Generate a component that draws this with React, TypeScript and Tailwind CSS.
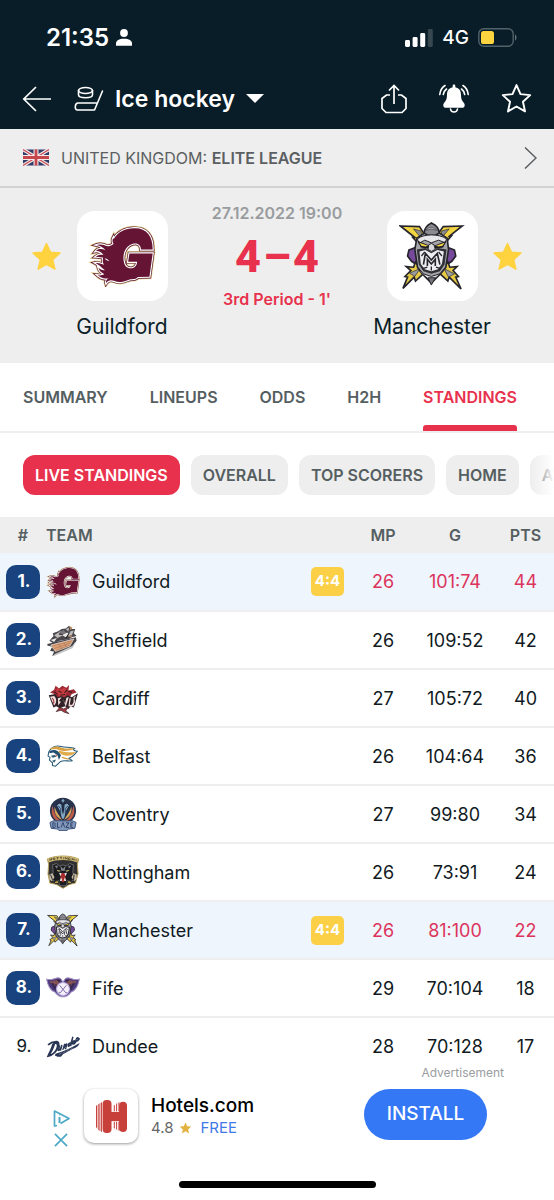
import React from "react";

type LogoProps = { className?: string };

const STAR = "M12 1.6l3.1 7 7.5.8-5.6 5.1 1.6 7.5-6.6-3.8L5.4 22 7 14.5 1.4 9.4l7.5-.8z";

const GOLD_STAR = "M12 2.4l2.9 6.2 6.9.6-5.3 4.9 1.6 6.9-6.1-3.6L5.9 21l1.6-6.9-5.3-4.9 6.9-.6z";

const G_PATH =
  "M74 44C88 18 112 9 138 8c40-1 58 24 58 66h-36c-1-14-10-22-25-18-22 6-32 28-29 52 2 18 12 26 26 24 10-2 15-9 16-20h-28l4-26h72l-10 72-36 1c-6 10-20 4-32 10-14 6-28 8-42 2-10-4-18-2-24 7-2-8 2-12 8-16-12 4-24 1-34-8 8 1 15 0 20-4-8-4-15-8-18-20 6 6 12 9 20 8-10-6-14-14-29-22 12-2 18 4 27 5-8-10-4-18-2-26 2 8 8 14 18 15-6-10-22-13-42-14 6-5 16-7 24-5-8-10-16-14-24-12 6-8 18-8 30-3-6-8-16-13-28-16 10-4 24-1 34 4 6 0 12-2 19-7-2-6-6-9-1-19 2 8 4 10 7 13z";

function GuildfordLogo({ className }: LogoProps) {
  return (
    <svg viewBox="-4 -2 210 192" className={className} aria-hidden="true">
      <path d={G_PATH} fill="none" stroke="#e3cf8d" strokeWidth="15" />
      <path d={G_PATH} fill="none" stroke="#5b1a35" strokeWidth="11" />
      <path d={G_PATH} fill="none" stroke="#fff" strokeWidth="7" />
      <path d={G_PATH} fill="#651533" />
    </svg>
  );
}

function ManchesterLogo({ className }: LogoProps) {
  return (
    <svg viewBox="0 0 200 212" className={className} aria-hidden="true">
      <g stroke="#25242c" strokeWidth="5" strokeLinejoin="miter">
        <path d="M4 15L62 17 86 54 80 72 60 58 62 72 42 50 48 50Z" fill="#f2d443" />
        <path d="M192 15L134 17 108 54 116 72 138 56 136 72 158 46 150 48Z" fill="#f2d443" />
        <path d="M44 24L76 62 66 30Z" fill="#8c8c8f" strokeWidth="2" />
        <path d="M152 24L120 62 130 30Z" fill="#8c8c8f" strokeWidth="2" />
        <path d="M30 88L56 78V134L38 122 26 106Z" fill="#77499b" />
        <path d="M168 88L142 78V134L160 122 172 106Z" fill="#77499b" />
        <path d="M22 138L44 140 50 124 76 158 50 182 46 170 12 204 26 170 18 168 36 150Z" fill="#e6ca45" />
        <path d="M176 138L154 140 148 124 122 158 148 182 152 170 188 206 172 170 180 168 164 150Z" fill="#e6ca45" />
        <path d="M32 158L64 144 48 168ZM168 160L136 144 150 170Z" fill="#9b9b9f" strokeWidth="2" />
        <path d="M54 52L78 36 98 24 122 36 146 52 150 86 142 140 126 160 98 188 70 160 56 140 48 86Z" fill="#a5a5a9" />
        <path d="M76 36C78 14 92 10 98 6c8 4 22 8 24 30L110 44H88Z" fill="#8a8a90" />
        <path d="M82 28C88 18 108 18 114 28L98 24Z" fill="#fff" strokeWidth="2" />
      </g>
      <path d="M56 54C76 38 120 38 144 54L140 66 120 58 98 66 78 58 60 68Z" fill="#e7e7ea" stroke="#25242c" strokeWidth="3" />
      <path d="M56 60L96 76 90 84 66 80ZM144 60L104 76 110 84 134 80Z" fill="#1f1e25" />
      <path d="M62 66L88 75 80 77 68 75ZM138 66L112 75 120 77 132 75Z" fill="#f2d443" />
      <path d="M90 72L98 68 106 72 110 86 98 92 88 86Z" fill="#d8d8db" stroke="#25242c" strokeWidth="3" />
      <path d="M54 86L80 82 98 94 118 82 144 86 138 132 124 152 98 160 74 152 60 132Z" fill="#303037" />
      <path d="M62 92L80 88 98 98 116 88 136 92 130 130 118 146 98 152 78 146 66 130Z" fill="#eeeef0" />
      <path d="M74 132L80 98 98 118 116 98 124 132M86 136V116L98 130 110 116V136" fill="none" stroke="#27262e" strokeWidth="5" />
      <path d="M68 106L78 94M130 106L120 94M72 144L86 140M126 144L112 140M98 138V150" stroke="#27262e" strokeWidth="4" />
      <path d="M56 140L66 156 98 184 130 156 142 140 124 160 98 168 74 160Z" fill="#dedee2" stroke="#25242c" strokeWidth="3" />
      <path d="M88 172H110L98 194Z" fill="#77777c" stroke="#25242c" strokeWidth="3" />
    </svg>
  );
}

function SheffieldLogo({ className }: LogoProps) {
  return (
    <svg viewBox="0 0 100 100" className={className} aria-hidden="true">
      <path d="M4 62L88 42 90 52 74 72 18 97 24 84 12 82 18 70 4 66Z" fill="#454247" />
      <path d="M14 65L82 47 70 68 28 84Z" fill="#dfa176" stroke="#ece5df" strokeWidth="2" />
      <path d="M18 68L78 52M24 75L74 58M30 81L70 65M36 62L48 76M52 58L62 72" stroke="#98684f" strokeWidth="1.5" />
      <path d="M24 92L80 66 84 58 88 55 78 74 22 98Z" fill="#c5c5c6" />
      <path d="M10 52L22 38 20 30 36 24 46 18 58 16 68 8 74 18 86 18 82 30 90 38 76 42 66 48 40 52 22 60Z" fill="#4a474d" />
      <path d="M24 36L42 24 56 30 46 38 34 44ZM58 18L68 14 66 26ZM72 24L82 22 76 36 64 38Z" fill="#bcb9b8" />
      <path d="M36 30L52 20 60 30 50 36Z" fill="#77757a" />
      <path d="M48 36L62 28 70 34 58 42ZM14 50L32 44 24 56Z" fill="#eae9e8" />
      <path d="M68 8L78 14 72 22ZM62 40L78 36 74 42Z" fill="#b88960" />
      <path d="M38 32L48 34M58 46L68 30" stroke="#242126" strokeWidth="3" />
    </svg>
  );
}

function CardiffLogo({ className }: LogoProps) {
  return (
    <svg viewBox="0 0 100 100" className={className} aria-hidden="true">
      <path d="M28 14L38 22 48 14 60 20 68 12 66 28 82 24 90 34 76 38 66 54 32 54 24 38 12 34 24 26Z" fill="#9e2934" />
      <path d="M32 16L40 26 54 20 62 28 56 46 42 48 30 34Z" fill="#c63b40" />
      <path d="M36 29L46 34M62 27L54 34M42 42L56 40M66 30L76 34M24 32L34 38" stroke="#351c21" strokeWidth="3" />
      <path d="M8 42L28 38 34 48 44 44 54 48 64 42 76 48 94 36 82 78 72 74 66 82 56 74 40 80 30 74 22 78Z" fill="#302226" />
      <path d="M12 46L24 44C34 54 30 66 24 72ZM35 51L46 48 42 53 38 59 44 61 36 72ZM49 51L56 66 60 49 67 47 58 76ZM69 51H73L70 70H78L76 76 66 74ZM81 48L88 43 84 52 86 60 80 75 76 72 81 62Z" fill="#f2dfdc" />
      <path d="M18 50C26 58 24 62 22 66" fill="none" stroke="#9e2934" strokeWidth="3" />
      <path d="M40 78L52 82 66 76 58 88 68 96 54 92 44 86 30 90Z" fill="#a63a42" stroke="#302226" strokeWidth="2" />
    </svg>
  );
}

function BelfastLogo({ className }: LogoProps) {
  return (
    <svg viewBox="0 0 100 100" className={className} aria-hidden="true">
      <path d="M8 38C16 24 30 18 44 22 58 26 74 22 84 28 78 30 80 34 92 36 84 46 78 54 66 57 72 58 74 60 77 64 66 66 52 62 43 66L28 80 19 78V70L10 62 12 54 6 50Z" fill="#fff" stroke="#285b78" strokeWidth="3" />
      <path d="M10 30C28 16 40 24 52 27 63 30 72 24 84 29 70 36 48 38 32 30Z" fill="#d7a143" />
      <path d="M40 34C56 42 72 38 88 38 78 50 62 52 48 46L36 38Z" fill="#e0ac4b" />
      <path d="M50 52C58 56 64 56 72 60 60 62 50 58 44 54Z" fill="#d7a143" />
      <path d="M10 36C24 28 36 32 44 48L38 62 34 48 22 40 10 42Z" fill="#204f70" />
      <path d="M14 49L26 47 30 52 20 55ZM18 64L30 60 24 70Z" fill="#315b71" />
      <path d="M28 46L33 51" stroke="#bd6c60" strokeWidth="4" />
    </svg>
  );
}

function CoventryLogo({ className }: LogoProps) {
  return (
    <svg viewBox="0 0 100 104" className={className} aria-hidden="true">
      <circle cx="50" cy="42" r="40" fill="#27334d" />
      <path d="M18 26C8 62 30 76 48 76 30 66 22 48 18 26ZM82 26C92 62 70 76 52 76 70 66 78 48 82 26Z" fill="#bd5b49" />
      <path d="M24 30C22 56 36 66 48 70 38 58 30 46 24 30ZM76 30C78 56 64 66 52 70 62 58 70 46 76 30Z" fill="#d9a65e" />
      <path d="M44 10L50 4 56 10 54 22 62 18 70 26 60 44 56 62 50 72 44 62 40 44 30 26 38 18 46 22Z" fill="#83a6c3" stroke="#1a2236" strokeWidth="3" />
      <path d="M45 24L50 12 55 24 53 42 50 54 47 42Z" fill="#1d2a43" />
      <path d="M35 27L43 36V50M65 27L57 36V50" fill="none" stroke="#334d6e" strokeWidth="3" />
      <path d="M10 78L20 73H80L90 78 86 96 66 98 62 103H38L34 98 14 96Z" fill="#8299bb" stroke="#3b527c" strokeWidth="3" />
      <path d="M19 79V93M19 79H24L27 82 24 86 28 90 24 93H19M33 78V93H40M44 93L50 78 55 93M59 79H68L59 93H69M81 79H74V93H81M74 86H79" fill="none" stroke="#233960" strokeWidth="2.6" />
    </svg>
  );
}

function NottinghamLogo({ className }: LogoProps) {
  return (
    <svg viewBox="0 0 100 104" className={className} aria-hidden="true">
      <path d="M2 12C30 0 70 0 98 12L94 28 96 58 88 86 70 90 50 102 30 90 10 86 4 58 6 28Z" fill="#302f31" stroke="#bda45b" strokeWidth="3" />
      <path d="M3 11C30 0 70 0 97 11L94 23C70 13 30 13 6 23Z" fill="#d2bd75" />
      <path d="M10 18V11L15 16V9M20 14V9H25V14ZM30 8H37M33 8V14M41 7H47M44 7V13M52 7V13M57 13V7L63 13V7M73 9H67V14H73M78 9V16M84 11V17M78 13H84M90 13V19" fill="none" stroke="#383025" strokeWidth="2" />
      <path d="M18 30L30 26 40 34 50 30 60 34 70 26 82 30 80 54 88 70 74 82 64 78 60 94H40L36 78 26 82 12 70 20 54Z" fill="#1b1c20" stroke="#66666a" strokeWidth="3" />
      <path d="M25 34L34 32 32 42ZM75 34L66 32 68 42ZM30 46L44 48 38 52ZM70 46L56 48 62 52ZM42 34L50 42 58 34 55 48H45Z" fill="#85868a" />
      <path d="M31 45L42 49 34 50ZM69 45L58 49 66 50Z" fill="#dbb33d" />
      <path d="M42 58L50 54 58 58 57 78 50 84 43 78Z" fill="#a62c2d" />
      <path d="M38 54L46 56 42 65ZM62 54L54 56 58 65ZM40 80L44 68 48 78ZM60 80L56 68 52 78Z" fill="#f2eee4" />
      <path d="M8 60L18 56 24 68 16 80 8 74ZM92 60L82 56 76 68 84 80 92 74Z" fill="#c6bba0" />
      <path d="M12 60L18 76M84 60L82 78M22 82L34 78 38 86 28 88ZM78 82L66 78 62 86 72 88Z" fill="#c6a84e" stroke="#2a292b" strokeWidth="3" />
    </svg>
  );
}

function FifeLogo({ className }: LogoProps) {
  return (
    <svg viewBox="0 0 100 100" className={className} aria-hidden="true">
      <path d="M2 24C14 28 24 22 36 20 46 20 46 30 50 32 54 30 54 20 64 20 76 22 86 28 98 24 94 46 86 58 74 62 66 72 58 76 50 76 42 76 34 72 26 62 14 58 6 46 2 24Z" fill="#4b397d" stroke="#a491c5" strokeWidth="3" />
      <path d="M10 30C24 32 30 24 42 26L36 40 24 48ZM90 30C76 32 70 24 58 26L64 40 76 48Z" fill="#975b48" />
      <path d="M14 34L32 40 26 56ZM86 34L68 40 74 56ZM30 26L44 26 38 34ZM70 26L56 26 62 34Z" fill="#35284b" />
      <path d="M18 28L28 44M82 28L72 44M24 26L33 37M76 26L67 37" stroke="#6b4869" strokeWidth="3" />
      <circle cx="50" cy="53" r="19" fill="#f4effb" stroke="#bcaedd" strokeWidth="3" />
      <path d="M40 42L58 64H63M60 42L42 64H37" fill="none" stroke="#655292" strokeWidth="2.4" />
    </svg>
  );
}

function DundeeLogo({ className }: LogoProps) {
  return (
    <svg viewBox="0 0 100 100" className={className} aria-hidden="true">
      <path d="M2 80C8 66 16 52 18 42L28 32C46 30 42 54 28 67 20 75 12 80 2 80Z" fill="#293655" />
      <path d="M14 70C20 62 24 50 27 41 35 39 32 54 24 63 20 68 17 70 14 70Z" fill="#fff" />
      <path d="M6 44C14 37 22 34 30 35" fill="none" stroke="#293655" strokeWidth="5" />
      <path d="M40 47L36 60Q41 62 47 44L43 59M50 57L55 41 52 55Q59 39 61 41L58 55M73 38Q65 38 65 47 67 52 75 34L79 20 73 46M78 41C88 34 85 28 80 33 74 41 80 46 87 36M88 34C99 27 95 19 90 25 85 33 91 37 98 26" fill="none" stroke="#293655" strokeWidth="4" strokeLinecap="round" />
      <path d="M28 70C52 62 76 52 99 38 97 47 88 52 78 56L50 71 44 79 34 79 26 75Z" fill="#293655" />
      <path d="M38 73L46 67M49 69L57 63M60 64L68 57M71 58L79 52" stroke="#a9afc2" strokeWidth="1.5" />
    </svg>
  );
}

type Team = {
  rank: number;
  name: string;
  Logo: (props: LogoProps) => React.ReactElement;
  mp: number;
  goals: string;
  pts: number;
  live?: string;
};

const teams: Team[] = [
  { rank: 1, name: "Guildford", Logo: GuildfordLogo, mp: 26, goals: "101:74", pts: 44, live: "4:4" },
  { rank: 2, name: "Sheffield", Logo: SheffieldLogo, mp: 26, goals: "109:52", pts: 42 },
  { rank: 3, name: "Cardiff", Logo: CardiffLogo, mp: 27, goals: "105:72", pts: 40 },
  { rank: 4, name: "Belfast", Logo: BelfastLogo, mp: 26, goals: "104:64", pts: 36 },
  { rank: 5, name: "Coventry", Logo: CoventryLogo, mp: 27, goals: "99:80", pts: 34 },
  { rank: 6, name: "Nottingham", Logo: NottinghamLogo, mp: 26, goals: "73:91", pts: 24 },
  { rank: 7, name: "Manchester", Logo: ManchesterLogo, mp: 26, goals: "81:100", pts: 22, live: "4:4" },
  { rank: 8, name: "Fife", Logo: FifeLogo, mp: 29, goals: "70:104", pts: 18 },
  { rank: 9, name: "Dundee", Logo: DundeeLogo, mp: 28, goals: "70:128", pts: 17 },
];

function StatusBar() {
  return (
    <div className="flex h-[68px] items-center justify-between pt-[7px] pr-[36px] pl-[46px]">
      <div className="flex items-center gap-[7px]">
        <span className="text-[24px] leading-7 font-semibold">21:35</span>
        <svg viewBox="0 0 16 17" className="h-[17px] w-4" fill="#fff" aria-hidden="true">
          <circle cx="8" cy="4" r="3.9" />
          <path d="M0 16.7V14.6C0 11.5 3 9.8 8 9.8s8 1.7 8 4.8v2.1z" />
        </svg>
      </div>
      <div className="flex items-center gap-[9px]">
        <svg viewBox="0 0 28 18" className="h-[18px] w-7" fill="#fff" aria-hidden="true">
          <rect x="0" y="11" width="5" height="7" rx="1.4" />
          <rect x="7.6" y="8" width="5" height="10" rx="1.4" />
          <rect x="15.2" y="4" width="5" height="14" rx="1.4" />
          <rect x="22.8" y="0" width="5" height="18" rx="1.4" fill="#37474f" />
        </svg>
        <span className="text-[19px] leading-6 font-medium">4G</span>
        <svg viewBox="0 0 40 19" className="h-[19px] w-10" aria-hidden="true">
          <rect x=".8" y=".8" width="34.4" height="17.4" rx="5" fill="none" stroke="#52626a" strokeWidth="1.4" />
          <rect x="3" y="3" width="13" height="13" rx="2.6" fill="#fbd440" />
          <path d="M37 6.5c2 .8 2 5.2 0 6z" fill="#64727a" />
        </svg>
      </div>
    </div>
  );
}

function NavBar() {
  return (
    <div className="flex h-[61px] items-center justify-between pr-[22px] pl-[22px]">
      <div className="flex items-center">
        <button aria-label="Back" className="mr-[22px]">
          <svg viewBox="0 0 30 26" className="h-[26px] w-[30px]" fill="none" stroke="#fff" strokeWidth="1.7" aria-hidden="true">
            <path d="M29 13H2M14 1L1.8 13 14 25" />
          </svg>
        </button>
        <button className="flex items-center">
          <svg viewBox="0 0 30 26" className="mr-[11px] h-[26px] w-[30px]" fill="none" stroke="#fff" strokeWidth="1.6" strokeLinejoin="round" strokeLinecap="round" aria-hidden="true">
            <ellipse cx="11.5" cy="4.5" rx="7" ry="3" />
            <path d="M4.5 4.5v4.2c0 4 14 4 14 0V4.5M28.5 5L20.5 24H3.500c-3.500 0-2.500-7 .5-7H23.500" />
          </svg>
          <span className="text-[23px] leading-7 font-semibold">Ice hockey</span>
          <svg viewBox="0 0 18 9" className="ml-[11px] h-[9px] w-[18px]" fill="#fff" aria-hidden="true">
            <path d="M0 0h18L9 9z" />
          </svg>
        </button>
      </div>
      <div className="flex items-center gap-8">
        <button aria-label="Share">
          <svg viewBox="0 0 26 30" className="h-[30px] w-[26px]" fill="none" stroke="#fff" strokeWidth="1.7" aria-hidden="true">
            <path d="M9 11H5.500L1 14.500v10L5 28.500h16l4-4v-10L20.500 11H17M13 20V2M8 6.500l5-5 5 5" />
          </svg>
        </button>
        <button aria-label="Notifications">
          <svg viewBox="0 0 30 30" className="h-[30px] w-[30px]" fill="none" stroke="#fff" strokeWidth="1.6" strokeLinecap="round" aria-hidden="true">
            <path d="M15 .5c.8 0 1.300.5 1.300 1.200v1.500c4 .8 5.700 3.600 5.700 7.300 0 4 .6 6 2.800 8.200 1.600 1.600 1 5-1 5H6.200c-2 0-2.600-3.400-1-5C7.400 16.500 8 14.500 8 10.500c0-3.700 1.700-6.500 5.700-7.300V1.700C13.700 1 14.200.5 15 .5z" fill="#fff" stroke="none" />
            <path d="M11.500 25c.5 4 6.500 4 7 0M6 1.500C3 3.500 1.200 6.500.8 10.500M7.500 5C5.500 6.500 4.700 8 4.300 10.500M24 1.500c3 2 4.800 5 5.200 9M22.500 5c2 1.500 2.800 3 3.200 5.500" />
          </svg>
        </button>
        <button aria-label="Add to favourites">
          <svg viewBox="0 0 24 24" className="h-[31px] w-[31px]" fill="none" stroke="#fff" strokeWidth="1.5" strokeLinejoin="round" aria-hidden="true">
            <path d={STAR} />
          </svg>
        </button>
      </div>
    </div>
  );
}

function LeagueBar() {
  return (
    <a href="#league" className="flex h-[59px] items-center border-b-2 border-[#d3d3d3] bg-[#eeeeee] px-[17px] pl-[23px] text-[#5b5f62]">
      <svg viewBox="0 0 26 16" className="mr-3 h-[17px] w-[26px]" aria-hidden="true">
        <path d="M0 0h26v16H0z" fill="#303c66" />
        <path d="M0 0l26 16M26 0L0 16" stroke="#f4ecee" strokeWidth="3.600" />
        <path d="M0 0l26 16M26 0L0 16" stroke="#c94d51" strokeWidth="1.200" />
        <path d="M13 0v16M0 8h26" stroke="#f4ecee" strokeWidth="5" />
        <path d="M13 0v16M0 8h26" stroke="#c5474b" strokeWidth="2.800" />
      </svg>
      <span className="grow text-[16px] leading-6">
        UNITED KINGDOM: <strong className="font-semibold">ELITE LEAGUE</strong>
      </span>
      <svg viewBox="0 0 13 22" className="h-[22px] w-[13px]" fill="none" stroke="#5b5f62" strokeWidth="1.500" aria-hidden="true">
        <path d="M1 .5L12 11 1 21.500" />
      </svg>
    </a>
  );
}

function FavouriteStar({ team }: { team: string }) {
  return (
    <button aria-label={`Favourite ${team}`} className="mt-[54px] self-start">
      <svg viewBox="1.500 1.500 21 20.500" className="h-[29px] w-[29px]" fill="#ffd23f" stroke="#ffd23f" strokeWidth="1" strokeLinejoin="round" aria-hidden="true">
        <path d={GOLD_STAR} />
      </svg>
    </button>
  );
}

function TeamCard({ name, children }: { name: string; children: React.ReactNode }) {
  return (
    <div className="flex w-[118px] flex-col items-center pt-[23px]">
      <div className="flex h-[90px] w-[91px] items-center justify-center rounded-[18px] bg-white">{children}</div>
      <span className="mt-[12px] text-[21px] leading-7">{name}</span>
    </div>
  );
}

function Match() {
  return (
    <section className="flex h-[175px] items-start justify-between bg-[#eeeeee] px-8 text-[#0b1e28]">
      <div className="flex gap-[2px]">
        <FavouriteStar team="Guildford" />
        <TeamCard name="Guildford">
          <GuildfordLogo className="h-[62px] w-[68px]" />
        </TeamCard>
      </div>
      <div className="flex flex-col items-center pt-[13px]">
        <span className="text-[16px] leading-6 font-semibold text-[#999c9e]">27.12.2022 19:00</span>
        <span className="flex items-center gap-[2px] font-['Roboto','Inter',sans-serif] text-[45px] leading-[64px] font-extrabold text-[#e8314c]">
          <span>4</span>
          <span>–</span>
          <span>4</span>
        </span>
        <span className="text-[16px] leading-5 font-semibold text-[#e8314c]">3rd Period - 1'</span>
      </div>
      <div className="flex gap-[2px]">
        <TeamCard name="Manchester">
          <ManchesterLogo className="h-[70px] w-[66px]" />
        </TeamCard>
        <FavouriteStar team="Manchester" />
      </div>
    </section>
  );
}

const tabs = ["SUMMARY", "LINEUPS", "ODDS", "H2H", "STANDINGS"];

function Tabs() {
  return (
    <nav className="flex h-[70px] justify-between border-b-2 border-[#eeeeee] pr-[37px] pl-[23px] text-[16px] font-semibold text-[#555e61]">
      {tabs.map((tab) =>
        tab === "STANDINGS" ? (
          <a key={tab} href="#standings" aria-current="page" className="flex h-[68px] flex-col justify-between pt-[22px] text-[#e8314c]">
            <span className="leading-6">{tab}</span>
            <span className="h-[6px] rounded-t-[3px] bg-[#e8314c]" />
          </a>
        ) : (
          <a key={tab} href={`#${tab.toLowerCase()}`} className="pt-[22px] leading-6">
            {tab}
          </a>
        ),
      )}
    </nav>
  );
}

const filters = ["OVERALL", "TOP SCORERS", "HOME", "AWAY"];

function Filters() {
  return (
    <div className="relative overflow-hidden pt-[22px] pb-[22px] pl-[23px]">
      <div className="flex gap-[11px] text-[16px] font-semibold whitespace-nowrap text-[#555e61]">
        <button className="h-10 shrink-0 rounded-xl bg-[#e8314c] px-3 text-white">LIVE STANDINGS</button>
        {filters.map((filter) => (
          <button key={filter} className="h-10 shrink-0 rounded-xl bg-[#eeeeee] px-3">
            {filter}
          </button>
        ))}
      </div>
      <div className="pointer-events-none absolute inset-y-0 right-0 w-6 bg-linear-to-r from-white/0 to-white" />
    </div>
  );
}

function Standings() {
  return (
    <table className="w-full table-fixed border-collapse text-[18px] text-[#111a22]">
      <thead className="bg-[#eeeeee] text-[16px] text-[#555e61]">
        <tr className="h-9">
          <th className="w-[46px] p-0 text-center font-semibold">#</th>
          <th className="p-0 text-left font-semibold">TEAM</th>
          <th className="w-[60px] p-0 text-center font-semibold">MP</th>
          <th className="w-[84px] p-0 text-center font-semibold">G</th>
          <th className="w-[57px] p-0 text-center font-semibold">PTS</th>
        </tr>
      </thead>
      <tbody>
        {teams.map(({ rank, name, Logo, mp, goals, pts, live }) => {
          const tone = live ? "p-0 text-center text-[#dc345b]" : "p-0 text-center";
          return (
            <tr key={name} className={`h-[58px] ${live ? "bg-[#eef5fd]" : "bg-white"} ${rank < 9 ? "border-b-2 border-[#eeeeee]" : ""}`}>
              <td className="p-0 pl-[6px]">
                <span
                  className={
                    rank < 9
                      ? "flex h-[34px] w-[34px] items-center justify-center rounded-[10px] bg-[#18437e] pl-[2px] text-[17px] font-bold text-white"
                      : "flex h-[34px] w-[34px] items-center justify-center pl-[2px] text-[17px]"
                  }
                >
                  {rank}.
                </span>
              </td>
              <td className="p-0 pr-[9px]">
                <div className="flex items-center">
                  <Logo className="mr-3 h-[34px] w-[34px]" />
                  <span className="grow">{name}</span>
                  {live && (
                    <span className="flex h-[29px] w-[33px] items-center justify-center rounded-[5px] bg-[#fcd046] text-[15px] font-bold text-white">
                      {live}
                    </span>
                  )}
                </div>
              </td>
              <td className={tone}>{mp}</td>
              <td className={tone}>{goals}</td>
              <td className={tone}>{pts}</td>
            </tr>
          );
        })}
      </tbody>
    </table>
  );
}

function AdBanner() {
  return (
    <aside className="-mt-[10px] flex flex-col pb-3">
      <span className="self-end pr-[50px] text-[12px] leading-4 text-[#9a9da0]">Advertisement</span>
      <div className="flex items-start justify-between pt-2 pr-[67px] pl-[53px]">
        <div className="flex items-start">
          <div className="mr-[13px] flex flex-col gap-[6px] pt-[21px]">
            <a href="#adchoices" aria-label="Ad choices">
              <svg viewBox="0 0 18 17" className="h-[17px] w-[18px]" fill="none" stroke="#4ba9c7" strokeWidth="1.700" strokeLinejoin="round" aria-hidden="true">
                <path d="M4 15.500L1.500 16V1l14.500 7.500L7.500 13.500" />
                <path d="M6.500 7v6" strokeWidth="2" />
                <circle cx="6.500" cy="4.800" r=".6" fill="#4ba9c7" stroke="none" />
              </svg>
            </a>
            <button aria-label="Close advertisement">
              <svg viewBox="0 0 16 15" className="h-[14px] w-[16px]" fill="none" stroke="#4ba9c7" strokeWidth="1.800" aria-hidden="true">
                <path d="M1.500 1l13 13M14.500 1l-13 13" />
              </svg>
            </button>
          </div>
          <div className="mr-[13px] flex h-[54px] w-[54px] items-center justify-center rounded-[10px] bg-white shadow-[0_1px_3px_rgba(0,0,0,0.4)]">
            <svg viewBox="0 0 94 100" className="h-[33px] w-[31px]" aria-hidden="true">
              <g fill="#c8403a">
                <path d="M0 18L4 14V88L0 82ZM7 13L11 10V94L7 90ZM14 9L18 6V98L14 94Z" />
                <path d="M54 17L57 14V34H54ZM61 12L64 9V34H61ZM68 8L71 6V34H68ZM54 66H57V88L54 84ZM61 66H64V92L61 88ZM68 66H71V95L68 92Z" />
                <rect x="20" y="0" width="27" height="100" rx="12" />
                <rect x="70" y="5" width="24" height="92" rx="12" />
                <path d="M40 36H76V64H40Z" />
              </g>
            </svg>
          </div>
          <div className="flex flex-col pt-[5px]">
            <span className="text-[19px] leading-6 font-medium text-black">Hotels.com</span>
            <span className="flex items-center gap-[6px] text-[15px] leading-5 text-[#666]">
              4.8
              <svg viewBox="1.500 1.500 21 20.500" className="h-3 w-[13px]" fill="#e3b341" aria-hidden="true">
                <path d={GOLD_STAR} />
              </svg>
              <span className="pl-[2px] text-[#3f79e8]">FREE</span>
            </span>
          </div>
        </div>
        <button className="h-[51px] w-[123px] rounded-full bg-[#3478f6] text-[19px] font-medium text-white">INSTALL</button>
      </div>
      <div className="mx-auto mt-[34px] h-[7px] w-[197px] rounded-full bg-black" />
    </aside>
  );
}

export default function App() {
  return (
    <main className="min-h-screen w-full overflow-hidden bg-white font-['Inter','Noto_Sans',sans-serif]">
      <header className="bg-[#081d27] text-white">
        <StatusBar />
        <NavBar />
      </header>
      <LeagueBar />
      <Match />
      <Tabs />
      <Filters />
      <Standings />
      <AdBanner />
    </main>
  );
}
